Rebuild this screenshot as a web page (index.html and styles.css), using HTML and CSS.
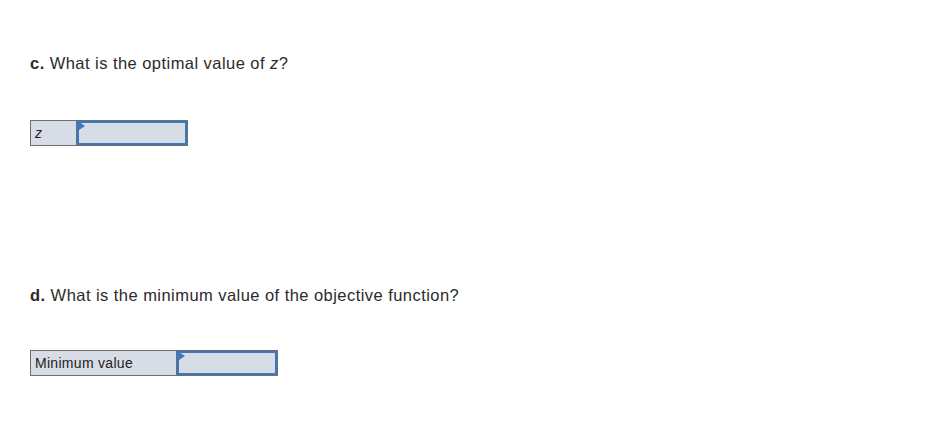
FILE: index.html
```html
<!DOCTYPE html>
<html>
<head>
<meta charset="utf-8">
<link rel="stylesheet" href="styles.css">
</head>
<body>
<div class="page">
  <section class="part">
    <p class="question"><b>c.</b> What is the optimal value of <i>z</i>?</p>
    <table class="answer">
      <tr>
        <td class="label label-z"><i>z</i></td>
        <td class="cell cell-z"><div class="input"><span class="flag"></span></div></td>
      </tr>
    </table>
  </section>
  <section class="part part-d">
    <p class="question"><b>d.</b> What is the minimum value of the objective function?</p>
    <table class="answer answer-d">
      <tr>
        <td class="label label-min">Minimum value</td>
        <td class="cell cell-min"><div class="input"><span class="flag"></span></div></td>
      </tr>
    </table>
  </section>
</div>
</body>
</html>
```
FILE: styles.css
```css
html, body {
  margin: 0;
  padding: 0;
  background: #ffffff;
}
.page {
  padding: 53px 0 0 30px;
  font-family: "Liberation Sans", Arial, sans-serif;
  color: #2b2b2b;
}
.question {
  margin: 0;
  font-size: 16.5px;
  letter-spacing: 0.45px;
  line-height: 20px;
}
.question b {
  font-weight: bold;
}
.answer {
  border-collapse: collapse;
  margin-top: 47px;
}
.answer-d {
  margin-top: 45px;
}
.part-d {
  margin-top: 139px;
}
.label {
  border: 1px solid #6f6f6f;
  background: #d8dce7;
  font-size: 14px;
  letter-spacing: 0.3px;
  padding: 0 0 0 4px;
  height: 24px;
  color: #222;
  vertical-align: middle;
}
.label-z {
  width: 41px;
}
.label-min {
  width: 141px;
}
.cell {
  border: 1px solid #6f6f6f;
  padding: 0;
  background: #d8dce7;
}
.cell-z .input { width: 106px; }
.cell-min .input { width: 96px; }
.input {
  position: relative;
  height: 20px;
  border: 2px solid #3c78c0;
  background: #d8dce7;
}
.flag {
  position: absolute;
  left: 0;
  top: 0;
  width: 0;
  height: 0;
  border-top: 4px solid transparent;
  border-bottom: 4px solid transparent;
  border-left: 6px solid #3c78c0;
  margin-top: -1px;
}
```
